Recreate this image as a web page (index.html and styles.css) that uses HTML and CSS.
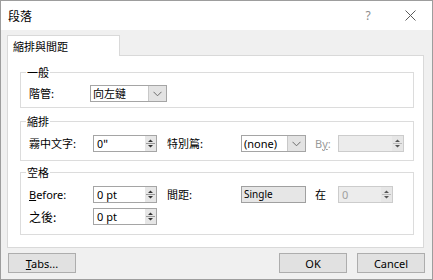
FILE: index.html
```html
<!DOCTYPE html>
<html>
<head>
<meta charset="utf-8">
<link rel="stylesheet" href="styles.css">
</head>
<body>
<div class="dialog">
  <div class="titlebar">
    <span class="title">段落</span>
    <span class="help">?</span>
    <span class="close"><svg width="11" height="11" viewBox="0 0 11 11"><path d="M0.5 0.5L10.5 10.5M10.5 0.5L0.5 10.5" stroke="#5a5a5a" stroke-width="1" fill="none"/></svg></span>
  </div>
  <div class="main">
    <div class="tabs"><div class="tab">縮排與間距</div></div>
    <div class="panel">
      <fieldset class="group g1">
        <legend>一般</legend>
        <div class="row row-general">
          <span class="lbl">階管:</span>
          <div class="combo">
            <span class="ctext">向左鏈</span>
            <span class="cbtn"><svg width="9" height="6" viewBox="0 0 9 6"><path d="M0.5 0.8L4.5 4.8L8.5 0.8" stroke="#6d6d6d" fill="none"/></svg></span>
          </div>
        </div>
      </fieldset>

      <fieldset class="group g2">
        <legend>縮排</legend>
        <div class="row row-grid">
          <span class="lbl">霧中文字:</span>
          <div class="spin">
            <span class="stext">0"</span>
            <span class="sbtn"><svg width="11" height="15" viewBox="0 0 11 15"><path d="M3 6L5.5 3.5L8 6Z M3 9L5.5 11.5L8 9Z" fill="#333"/><path d="M1 7.5H10" stroke="#999"/></svg></span>
          </div>
          <span class="lbl lbl-mid">特別篇:</span>
          <div class="combo">
            <span class="ctext latin">(none)</span>
            <span class="cbtn"><svg width="9" height="6" viewBox="0 0 9 6"><path d="M0.5 0.8L4.5 4.8L8.5 0.8" stroke="#6d6d6d" fill="none"/></svg></span>
          </div>
          <span class="lbl lbl-small dim latin">B<u>y</u>:</span>
          <div class="spin disabled w-by">
            <span class="stext"></span>
            <span class="sbtn"><svg width="11" height="15" viewBox="0 0 11 15"><path d="M3 6L5.5 3.5L8 6Z M3 9L5.5 11.5L8 9Z" fill="#555"/><path d="M1 7.5H10" stroke="#bbb"/></svg></span>
          </div>
        </div>
      </fieldset>

      <fieldset class="group g3">
        <legend>空格</legend>
        <div class="row row-grid">
          <span class="lbl latin"><u>B</u>efore:</span>
          <div class="spin">
            <span class="stext latin">0 pt</span>
            <span class="sbtn"><svg width="11" height="15" viewBox="0 0 11 15"><path d="M3 6L5.5 3.5L8 6Z M3 9L5.5 11.5L8 9Z" fill="#333"/><path d="M1 7.5H10" stroke="#999"/></svg></span>
          </div>
          <span class="lbl lbl-mid">間距:</span>
          <div class="single latin">Single</div>
          <span class="lbl lbl-small">在</span>
          <div class="spin disabled w-at">
            <span class="stext dimtext latin">0</span>
            <span class="sbtn"><svg width="11" height="15" viewBox="0 0 11 15"><path d="M3 6L5.5 3.5L8 6Z M3 9L5.5 11.5L8 9Z" fill="#555"/><path d="M1 7.5H10" stroke="#bbb"/></svg></span>
          </div>
        </div>
        <div class="row row-grid row-after">
          <span class="lbl big">之後:</span>
          <div class="spin">
            <span class="stext latin">0 pt</span>
            <span class="sbtn"><svg width="11" height="15" viewBox="0 0 11 15"><path d="M3 6L5.5 3.5L8 6Z M3 9L5.5 11.5L8 9Z" fill="#333"/><path d="M1 7.5H10" stroke="#999"/></svg></span>
          </div>
        </div>
      </fieldset>
    </div>
    <div class="footer">
      <button class="btn latin"><u>T</u>abs...</button>
      <span class="spacer"></span>
      <button class="btn latin">OK</button>
      <button class="btn latin">Cancel</button>
    </div>
  </div>
</div>
</body>
</html>
```

FILE: styles.css
```css
html, body {
  margin: 0;
  padding: 0;
  background: #ffffff;
}

body {
  font-family: "Noto Sans CJK TC", "Noto Sans", sans-serif;
  font-size: 11px;
  color: #000;
}

.latin {
  font-family: "Noto Sans", "Noto Sans CJK TC", sans-serif;
}

.dialog {
  width: 433px;
  height: 280px;
  box-sizing: border-box;
  border: 1px solid #9d9d9d;
  background: #f0f0f0;
  display: flex;
  flex-direction: column;
}

.titlebar {
  height: 29px;
  flex: none;
  background: #ffffff;
  display: flex;
  align-items: center;
  padding-left: 7px;
}

.title {
  font-size: 12px;
  line-height: 14px;
}

.help {
  margin-left: auto;
  width: 8px;
  text-align: center;
  color: #8c8c8c;
  font-family: "Noto Sans", sans-serif;
  font-size: 12px;
}

.close {
  display: flex;
  margin-left: 33px;
  margin-right: 16px;
}

.main {
  flex: 1;
  display: flex;
  flex-direction: column;
  padding: 5px 8px 0 6px;
}

.tabs {
  display: flex;
}

.tab {
  width: 113px;
  height: 21px;
  box-sizing: border-box;
  border: 1px solid #d9d9d9;
  border-bottom: 0;
  background: #ffffff;
  margin-bottom: -1px;
  position: relative;
  padding-left: 5px;
  line-height: 20px;
}

.panel {
  height: 193px;
  box-sizing: border-box;
  border: 1px solid #d9d9d9;
  background: #ffffff;
  padding: 0 9px 0 12px;
}

.group {
  margin: 0;
  border: 1px solid #dcdcdc;
  padding: 0 0 0 8px;
  min-width: 0;
}

.group legend {
  padding: 0 1px;
  margin-left: -3px;
  line-height: 14px;
  height: 14px;
}

.g1 {
  margin-top: 9px;
  padding-bottom: 5px;
}

.g2 {
  margin-top: 6px;
  padding-bottom: 8px;
}

.g3 {
  margin-top: 4px;
  padding-bottom: 9px;
}

.row {
  height: 17px;
  align-items: center;
}

.g1 .row {
  margin-top: 6px;
}

.g2 .row {
  margin-top: 7px;
}

.g3 .row {
  margin-top: 7px;
}

.g3 .row-after {
  margin-top: 5px;
}

.row-general {
  display: grid;
  grid-template-columns: 61px 77px;
}

.row-grid {
  display: grid;
  grid-template-columns: 64px 64px 84px 65px 32px auto;
}

.lbl {
  white-space: nowrap;
  line-height: 17px;
}

.lbl.big {
  font-size: 12px;
}

.lbl-mid {
  padding-left: 10px;
}

.lbl-small {
  padding-left: 9px;
}

.dim {
  color: #9a9a9a;
}

.combo {
  height: 17px;
  box-sizing: border-box;
  border: 1px solid #a5a5a5;
  background: #ffffff;
  display: flex;
  align-items: stretch;
}

.ctext {
  flex: 1;
  padding-left: 2px;
  line-height: 15px;
  white-space: nowrap;
  overflow: hidden;
}

.cbtn {
  width: 17px;
  background: #e3e3e3;
  border-left: 1px solid #c8c8c8;
  display: flex;
  align-items: center;
  justify-content: center;
}

.spin {
  height: 17px;
  box-sizing: border-box;
  border: 1px solid #a5a5a5;
  background: #ffffff;
  display: flex;
  align-items: stretch;
}

.spin.disabled {
  background: #ececec;
  border-color: #cccccc;
}

.w-by {
  width: 66px;
}

.w-at {
  width: 55px;
}

.stext {
  flex: 1;
  padding-left: 3px;
  line-height: 15px;
  white-space: nowrap;
}

.dimtext {
  color: #a0a0a0;
}

.sbtn {
  width: 11px;
  background: #e6e6e6;
  display: flex;
  align-items: center;
  justify-content: center;
}

.single {
  height: 17px;
  box-sizing: border-box;
  border: 1px solid #a0a0a0;
  background: #e6e6e6;
  line-height: 15px;
  padding-left: 2px;
  font-size: 10px;
}

.footer {
  display: flex;
  margin-top: 5px;
  margin-left: 1px;
  margin-right: -1px;
}

.spacer {
  flex: 1;
}

.btn {
  width: 68px;
  height: 20px;
  box-sizing: border-box;
  border: 1px solid #adadad;
  background: #e1e1e1;
  font-size: 11px;
  color: #000;
  padding: 0;
  margin: 0;
}

.btn + .btn {
  margin-left: 10px;
}
```
